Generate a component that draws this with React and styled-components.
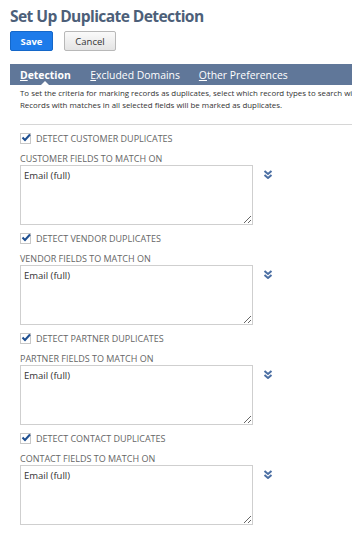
import React from "react";
import styled, { createGlobalStyle } from "styled-components";

const Global = createGlobalStyle`
  html, body { margin: 0; padding: 0; background: #fff; overflow: hidden; }
  body { font-family: "Open Sans", "Noto Sans", Arial, sans-serif; }
`;

const Page = styled.div`
  width: 620px;
  padding: 4px 0 0 10px;
`;

const Title = styled.h1`
  margin: 0;
  font-size: 15.6px;
  line-height: 24px;
  font-weight: 700;
  letter-spacing: -0.6px;
  color: #4d5f79;
`;

const ButtonRow = styled.div`
  display: flex;
  gap: 11px;
  margin-top: 3px;
`;

const Button = styled.button`
  height: 20px;
  padding: 0 ${(p) => (p.$primary ? "9px" : "10px")};
  border-radius: 2px;
  font-family: "Open Sans", Arial, sans-serif;
  font-size: 9.5px;
  font-weight: ${(p) => (p.$primary ? 700 : 400)};
  color: ${(p) => (p.$primary ? "#fff" : "#333")};
  background: ${(p) => (p.$primary ? "#1d7bea" : "linear-gradient(#fafafa, #e4e4e4)")};
  border: 1px solid ${(p) => (p.$primary ? "#1467c9" : "#b8b8b8")};
  min-width: ${(p) => (p.$primary ? "43px" : "52px")};
`;

const TabBar = styled.div`
  margin-top: 13px;
  height: 21px;
  background: #607799;
  display: flex;
  align-items: center;
`;

const Tab = styled.div`
  position: relative;
  height: 21px;
  display: flex;
  align-items: center;
  padding: 0 ${(p) => (p.$active ? "10px" : "9.5px")};
  color: #fff;
  font-size: 10.4px;
  font-weight: ${(p) => (p.$active ? 700 : 400)};
  u { text-decoration: underline; text-underline-offset: 1px; }
  &::after {
    content: "";
    display: ${(p) => (p.$active ? "block" : "none")};
    position: absolute;
    left: 50%;
    bottom: 0;
    margin-left: -4px;
    border-left: 4px solid transparent;
    border-right: 4px solid transparent;
    border-bottom: 4px solid #fff;
  }
`;

const Content = styled.div`
  padding-left: 10px;
`;

const Description = styled.p`
  margin: 3px 0 0;
  font-size: 7.9px;
  line-height: 11.5px;
  color: #333;
  white-space: nowrap;
`;

const Rule = styled.hr`
  margin: 13px 0 0;
  border: 0;
  border-top: 1px solid #d6d6d6;
`;

const Sections = styled.div`
  display: flex;
  flex-direction: column;
  gap: 6px;
  margin-top: 6px;
`;

const Section = styled.div`
  display: flex;
  flex-direction: column;
`;

const CheckRow = styled.label`
  display: flex;
  align-items: center;
  gap: 5px;
  height: 14px;
  font-size: 9px;
  color: #666;
  text-transform: uppercase;
`;

const Box = styled.span`
  position: relative;
  width: 9px;
  height: 9px;
  border: 1px solid #c8c8c8;
  background: #fff;
  flex: none;
  svg { position: absolute; left: 0px; top: -1px; }
`;

const FieldLabel = styled.div`
  margin-top: 7px;
  font-size: 9px;
  line-height: 13px;
  color: #666;
  text-transform: uppercase;
`;

const FieldRow = styled.div`
  display: flex;
  align-items: flex-start;
  gap: 10px;
`;

const Area = styled.textarea`
  box-sizing: border-box;
  width: 233px;
  height: 60px;
  margin: 0;
  padding: 3px 3px;
  border: 1px solid #cfcfcf;
  font-family: "Open Sans", Arial, sans-serif;
  font-size: 9.5px;
  line-height: 13px;
  color: #333;
  background: #fff;
  outline: none;
`;

const Expand = styled.span`
  margin-top: 5px;
  display: flex;
`;

const Check = () => (
  <svg width="10" height="9" viewBox="0 0 10 9">
    <path d="M1.5 4.5 L4 7 L9 1.5" fill="none" stroke="#1e4f91" strokeWidth="2" />
  </svg>
);

const Chevrons = () => (
  <svg width="10" height="9" viewBox="0 0 10 9">
    <path d="M1.5 1 L5 4 L8.5 1" fill="none" stroke="#4a6ea3" strokeWidth="2" />
    <path d="M1.5 5 L5 8 L8.5 5" fill="none" stroke="#4a6ea3" strokeWidth="2" />
  </svg>
);

const groups = ["Customer", "Vendor", "Partner", "Contact"];

export default function App() {
  return (
    <>
      <Global />
      <Page>
        <Title>Set Up Duplicate Detection</Title>
        <ButtonRow>
          <Button $primary>Save</Button>
          <Button>Cancel</Button>
        </ButtonRow>
        <TabBar>
          <Tab $active><span><u>D</u>etection</span></Tab>
          <Tab><span><u>E</u>xcluded Domains</span></Tab>
          <Tab><span><u>O</u>ther Preferences</span></Tab>
        </TabBar>
        <Content>
          <Description>
            To set the criteria for marking records as duplicates, select which record types to search with and which fields to match on.
            <br />
            Records with matches in all selected fields will be marked as duplicates.
          </Description>
          <Rule />
          <Sections>
            {groups.map((g) => (
              <Section key={g}>
                <CheckRow>
                  <Box><Check /></Box>
                  Detect {g} Duplicates
                </CheckRow>
                <FieldLabel>{g} Fields to Match On</FieldLabel>
                <FieldRow>
                  <Area readOnly value="Email (full)" />
                  <Expand><Chevrons /></Expand>
                </FieldRow>
              </Section>
            ))}
          </Sections>
        </Content>
      </Page>
    </>
  );
}
